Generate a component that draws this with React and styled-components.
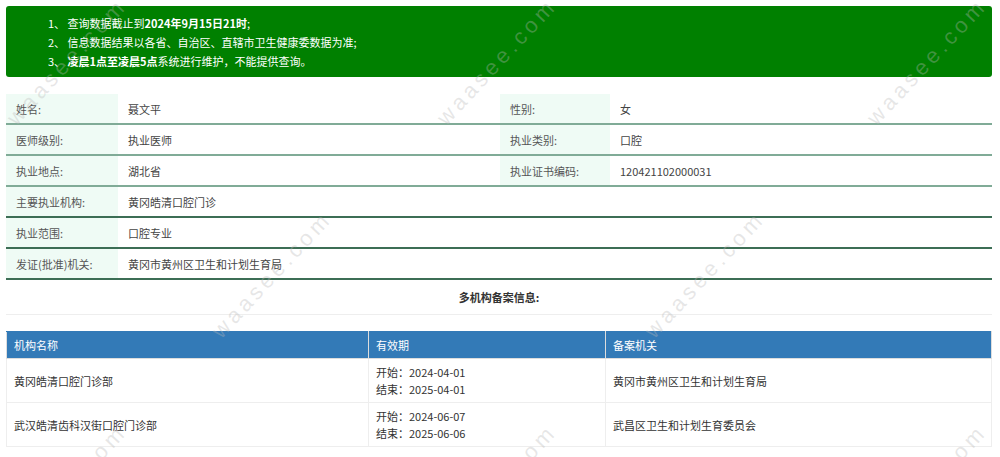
import React from "react";
import styled, { createGlobalStyle } from "styled-components";

const GlobalStyle = createGlobalStyle`
  html, body {
    margin: 0;
    padding: 0;
    background: #fff;
  }
  body {
    font-family: "Noto Sans CJK SC", "Noto Sans", sans-serif;
    font-size: 11px;
    color: #333;
  }
`;

const info = [
  [["姓名:", "聂文平"], ["性别:", "女"]],
  [["医师级别:", "执业医师"], ["执业类别:", "口腔"]],
  [["执业地点:", "湖北省"], ["执业证书编码:", "120421102000031"]],
  [["主要执业机构:", "黄冈皓清口腔门诊"]],
  [["执业范围:", "口腔专业"]],
  [["发证(批准)机关:", "黄冈市黄州区卫生和计划生育局"]],
];

const records = [
  {
    name: "黄冈皓清口腔门诊部",
    start: "2024-04-01",
    end: "2025-04-01",
    office: "黄冈市黄州区卫生和计划生育局",
  },
  {
    name: "武汉皓清齿科汉街口腔门诊部",
    start: "2024-06-07",
    end: "2025-06-06",
    office: "武昌区卫生和计划生育委员会",
  },
];

// watermark centres, staggered like the site's tiled background
const marks = [
  [67, 62], [497, 62], [927, 62],
  [272, 275], [705, 275],
  [67, 488], [497, 488], [927, 488],
];

const App = () => {
  return (
    <Page>
      <GlobalStyle />
      <Notice>
        <li>1、 查询数据截止到<b>2024年9月15日21时</b>;</li>
        <li>2、 信息数据结果以各省、自治区、直辖市卫生健康委数据为准;</li>
        <li>3、 <b>凌晨1点至凌晨5点</b>系统进行维护，不能提供查询。</li>
      </Notice>

      <InfoTable>
        <colgroup>
          <col style={{ width: 112 }} />
          <col style={{ width: 382 }} />
          <col style={{ width: 110 }} />
          <col />
        </colgroup>
        <tbody>
          {info.map((row, i) => (
            <InfoRow key={i} $dark={i > 2}>
              {row.map(([label, value], j) => (
                <React.Fragment key={j}>
                  <Label>{label}</Label>
                  <Value colSpan={row.length === 1 ? 3 : 1}>{value}</Value>
                </React.Fragment>
              ))}
            </InfoRow>
          ))}
        </tbody>
      </InfoTable>

      <SectionTitle>多机构备案信息:</SectionTitle>

      <RecordTable>
        <colgroup>
          <col style={{ width: 362 }} />
          <col style={{ width: 237 }} />
          <col />
        </colgroup>
        <thead>
          <tr>
            <Head>机构名称</Head>
            <Head>有效期</Head>
            <Head>备案机关</Head>
          </tr>
        </thead>
        <tbody>
          {records.map((r) => (
            <tr key={r.name}>
              <Cell>{r.name}</Cell>
              <Cell>
                <DateLine>开始：{r.start}</DateLine>
                <DateLine>结束：{r.end}</DateLine>
              </Cell>
              <Cell>{r.office}</Cell>
            </tr>
          ))}
        </tbody>
      </RecordTable>

      <MarkLayer aria-hidden="true">
        {marks.map(([x, y], i) => (
          <Mark key={i} style={{ left: x, top: y }}>
            waasee.com
          </Mark>
        ))}
      </MarkLayer>
    </Page>
  );
};

export default App;

const Page = styled.div`
  position: relative;
  height: 457px;
  overflow: hidden;
  padding: 6px 8px 0 6px;
  box-sizing: border-box;
`;

const Notice = styled.ul`
  list-style: none;
  margin: 0;
  padding: 8px 0 6px 42px;
  height: 71px;
  box-sizing: border-box;
  background: #008000;
  border-radius: 3px;
  color: #fff;
  font-size: 11px;
  line-height: 19px;

  b {
    font-weight: bold;
  }
`;

const InfoTable = styled.table`
  width: 100%;
  margin-top: 17px;
  border-collapse: collapse;
  table-layout: fixed;
`;

const InfoRow = styled.tr`
  td {
    height: 29px;
    border-bottom: 2px solid ${(p) => (p.$dark ? "#3c6e55" : "#80ab97")};
  }
`;

const Label = styled.td`
  padding: 0 10px;
  background: #effbf5;
  color: #555;
  white-space: nowrap;
`;

const Value = styled.td`
  padding: 0 10px;
  color: #444;
`;

const SectionTitle = styled.div`
  height: 34px;
  line-height: 35px;
  text-align: center;
  font-weight: bold;
  color: #333;
  border-bottom: 1px solid #eee;
  margin-bottom: 16px;
`;

const RecordTable = styled.table`
  width: 100%;
  border-collapse: collapse;
  table-layout: fixed;
`;

const Head = styled.th`
  height: 26px;
  padding: 0 7px;
  background: #337ab7;
  color: #fff;
  font-weight: normal;
  text-align: left;
  border: 1px solid #ddd;
  border-top: 1px solid #337ab7;
`;

const Cell = styled.td`
  height: 43px;
  padding: 0 7px;
  color: #333;
  border: 1px solid #eee;
`;

const DateLine = styled.div`
  line-height: 17px;
`;

const MarkLayer = styled.div`
  position: absolute;
  inset: 0;
  pointer-events: none;
`;

const Mark = styled.span`
  position: absolute;
  transform: translate(-50%, -50%) rotate(-47deg);
  font-family: "Liberation Sans", sans-serif;
  font-size: 22px;
  letter-spacing: 4px;
  color: rgba(185, 185, 185, 0.35);
  white-space: nowrap;
`;
